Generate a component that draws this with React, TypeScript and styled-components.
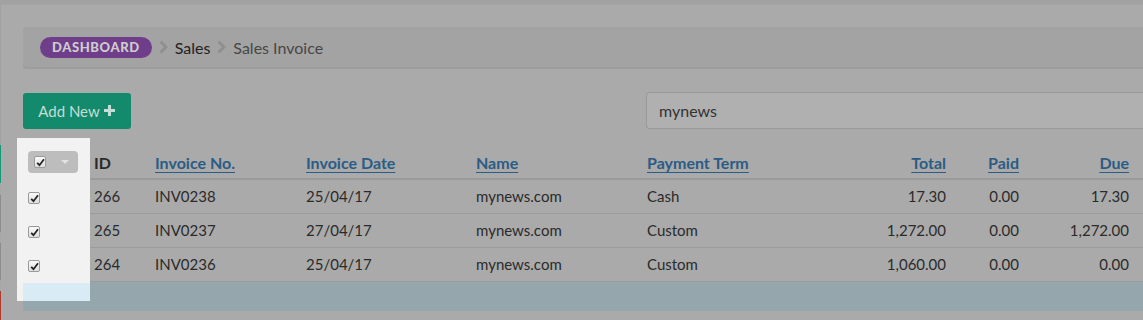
import React from "react";
import styled, { createGlobalStyle } from "styled-components";

const GlobalStyle = createGlobalStyle`
  html, body {
    margin: 0;
    padding: 0;
    background: #a2a2a2;
    overflow: hidden;
  }
  body {
    font-family: Lato, "Open Sans", sans-serif;
    color: #2a2a2a;
  }
`;

const Page = styled.div`
  display: flex;
  width: 1143px;
  height: 320px;
  overflow: hidden;
`;

const SideEdge = styled.div`
  width: 1px;
  display: flex;
  flex-direction: column;
  padding-top: 145px;
`;

const EdgePiece = styled.div<{ $color: string; $h: number }>`
  height: ${(p) => p.$h}px;
  background: ${(p) => p.$color};
`;

const Panel = styled.main`
  position: relative;
  flex: 1;
  margin-top: 4px;
  padding: 22px 0 0 22px;
  background: #aaaaaa;
  border-top: 1px solid #a6a6a6;
  min-width: 0;
`;

const Breadcrumb = styled.nav`
  height: 40px;
  display: flex;
  align-items: center;
  gap: 7px;
  padding-left: 17px;
  background: #a3a3a3;
  border-radius: 4px 0 0 4px;
  box-shadow: 0 2px 0 #9d9d9d;
`;

const Pill = styled.span`
  height: 21px;
  padding: 0 12px;
  display: inline-flex;
  align-items: center;
  border-radius: 11px;
  background: #6f3e8a;
  color: #cdcdcd;
  font-weight: 900;
  font-size: 13px;
  letter-spacing: 0.6px;
`;

const Crumb = styled.span<{ $muted?: boolean }>`
  font-size: 16px;
  color: ${(p) => (p.$muted ? "#474747" : "#222")};
`;

const Chevron = () => (
  <svg width="9" height="14" viewBox="0 0 9 14">
    <path d="M1.5 1.5 L7 7 L1.5 12.5" fill="none" stroke="#8f8f8f" strokeWidth="3" />
  </svg>
);

const Toolbar = styled.div`
  display: grid;
  grid-template-columns: 623px 1fr;
  align-items: center;
  margin-top: 25px;
`;

const AddButton = styled.button`
  width: 108px;
  height: 36px;
  display: inline-flex;
  align-items: center;
  justify-content: center;
  gap: 3px;
  border: none;
  border-radius: 3px;
  background: #138a6c;
  color: #c4ddd6;
  font-family: inherit;
  font-size: 15px;
  padding: 0;
`;

const SearchBox = styled.div`
  height: 35px;
  display: flex;
  align-items: center;
  padding-left: 12px;
  background: #b0b0b0;
  border: 1px solid #999;
  border-right: none;
  border-radius: 4px 0 0 4px;
  font-size: 16px;
  color: #333;
`;

const Table = styled.table`
  margin-top: 17px;
  width: 1120px;
  border-collapse: collapse;
  table-layout: fixed;
  font-size: 15px;
`;

const Th = styled.th<{ $w: number; $right?: boolean; $pr?: number; $lit?: boolean }>`
  box-sizing: border-box;
  width: ${(p) => p.$w}px;
  height: 33px;
  padding: 0 ${(p) => p.$pr ?? 8}px 0 8px;
  text-align: ${(p) => (p.$right ? "right" : "left")};
  font-weight: 700;
  font-size: 16px;
  border-bottom: 2px solid ${(p) => (p.$lit ? "#dcdcdc" : "#9b9b9b")};
  ${(p) => p.$lit && "position: relative; z-index: 2; padding-left: 5px;"}
`;

const SortLink = styled.span`
  color: #2a5c85;
  text-decoration: underline;
  text-underline-offset: 3px;
`;

const Td = styled.td<{ $right?: boolean; $pr?: number; $lit?: boolean }>`
  box-sizing: border-box;
  height: 34px;
  padding: 0 ${(p) => p.$pr ?? 8}px 0 8px;
  text-align: ${(p) => (p.$right ? "right" : "left")};
  border-bottom: 1px solid ${(p) => (p.$lit ? "#dcdcdc" : "#9c9c9c")};
  ${(p) => p.$lit && "position: relative; z-index: 2; padding-left: 5px;"}
`;

const FootRow = styled.tr`
  height: 30px;
  background: #95a6ad;
`;

const Box = styled.span`
  width: 12px;
  height: 12px;
  display: inline-flex;
  align-items: center;
  justify-content: center;
  box-sizing: border-box;
  border: 1px solid #9a9a9a;
  border-radius: 2px;
  background: linear-gradient(#fafafa, #dedede);
  vertical-align: middle;
`;

const Check = () => (
  <Box>
    <svg width="9" height="9" viewBox="0 0 9 9">
      <path d="M1.2 4.8 L3.5 7.2 L8 1.3" fill="none" stroke="#222" strokeWidth="1.8" />
    </svg>
  </Box>
);

const SelectGroup = styled.div`
  width: 50px;
  height: 22px;
  display: flex;
  align-items: center;
  border-radius: 4px;
  background: #bdbdbd;
`;

const SelectPart = styled.span<{ $w: number }>`
  width: ${(p) => p.$w}px;
  display: flex;
  justify-content: center;
`;

const Caret = styled.span`
  width: 0;
  height: 0;
  border-left: 4px solid transparent;
  border-right: 4px solid transparent;
  border-top: 4px solid #e2e2e2;
`;

const Highlight = styled.div`
  position: absolute;
  left: 16px;
  top: 133px;
  width: 73px;
  height: 163px;
  background: #f2f2f2;
  z-index: 1;

  &::after {
    content: "";
    position: absolute;
    left: 6px;
    right: 0;
    bottom: 0;
    height: 18px;
    background: #d9ecf5;
  }
`;

type Row = {
  id: number;
  no: string;
  date: string;
  name: string;
  term: string;
  total: string;
  paid: string;
  due: string;
};

const rows: Row[] = [
  { id: 266, no: "INV0238", date: "25/04/17", name: "mynews.com", term: "Cash", total: "17.30", paid: "0.00", due: "17.30" },
  { id: 265, no: "INV0237", date: "27/04/17", name: "mynews.com", term: "Custom", total: "1,272.00", paid: "0.00", due: "1,272.00" },
  { id: 264, no: "INV0236", date: "25/04/17", name: "mynews.com", term: "Custom", total: "1,060.00", paid: "0.00", due: "0.00" },
];

export default function App() {
  return (
    <Page>
      <GlobalStyle />
      <SideEdge>
        <EdgePiece $color="#129a7a" $h={40} />
        <EdgePiece $color="#a6a6a6" $h={12} />
        <EdgePiece $color="#8c8c8c" $h={38} />
        <EdgePiece $color="#a6a6a6" $h={12} />
        <EdgePiece $color="#8c8c8c" $h={38} />
        <EdgePiece $color="#a6a6a6" $h={12} />
        <EdgePiece $color="#b03a30" $h={30} />
      </SideEdge>
      <Panel>
        <Breadcrumb>
          <Pill>DASHBOARD</Pill>
          <Chevron />
          <Crumb>Sales</Crumb>
          <Chevron />
          <Crumb $muted>Sales Invoice</Crumb>
        </Breadcrumb>

        <Toolbar>
          <div>
            <AddButton>
              Add New
              <svg width="13" height="13" viewBox="0 0 13 13">
                <path d="M6.5 1 V12 M1 6.5 H12" stroke="#c4ddd6" strokeWidth="3" />
              </svg>
            </AddButton>
          </div>
          <SearchBox>mynews</SearchBox>
        </Toolbar>

        <Table>
          <thead>
            <tr>
              <Th $w={63} $lit>
                <SelectGroup>
                  <SelectPart $w={24}>
                    <Check />
                  </SelectPart>
                  <SelectPart $w={26}>
                    <Caret />
                  </SelectPart>
                </SelectGroup>
              </Th>
              <Th $w={61}>ID</Th>
              <Th $w={151}><SortLink>Invoice No.</SortLink></Th>
              <Th $w={170}><SortLink>Invoice Date</SortLink></Th>
              <Th $w={171}><SortLink>Name</SortLink></Th>
              <Th $w={171}><SortLink>Payment Term</SortLink></Th>
              <Th $w={144} $right><SortLink>Total</SortLink></Th>
              <Th $w={73} $right><SortLink>Paid</SortLink></Th>
              <Th $w={116} $right $pr={14}><SortLink>Due</SortLink></Th>
            </tr>
          </thead>
          <tbody>
            {rows.map((r) => (
              <tr key={r.id}>
                <Td $lit><Check /></Td>
                <Td>{r.id}</Td>
                <Td>{r.no}</Td>
                <Td>{r.date}</Td>
                <Td>{r.name}</Td>
                <Td>{r.term}</Td>
                <Td $right>{r.total}</Td>
                <Td $right>{r.paid}</Td>
                <Td $right $pr={14}>{r.due}</Td>
              </tr>
            ))}
            <FootRow>
              <td colSpan={9} />
            </FootRow>
          </tbody>
        </Table>
        <Highlight />
      </Panel>
    </Page>
  );
}
